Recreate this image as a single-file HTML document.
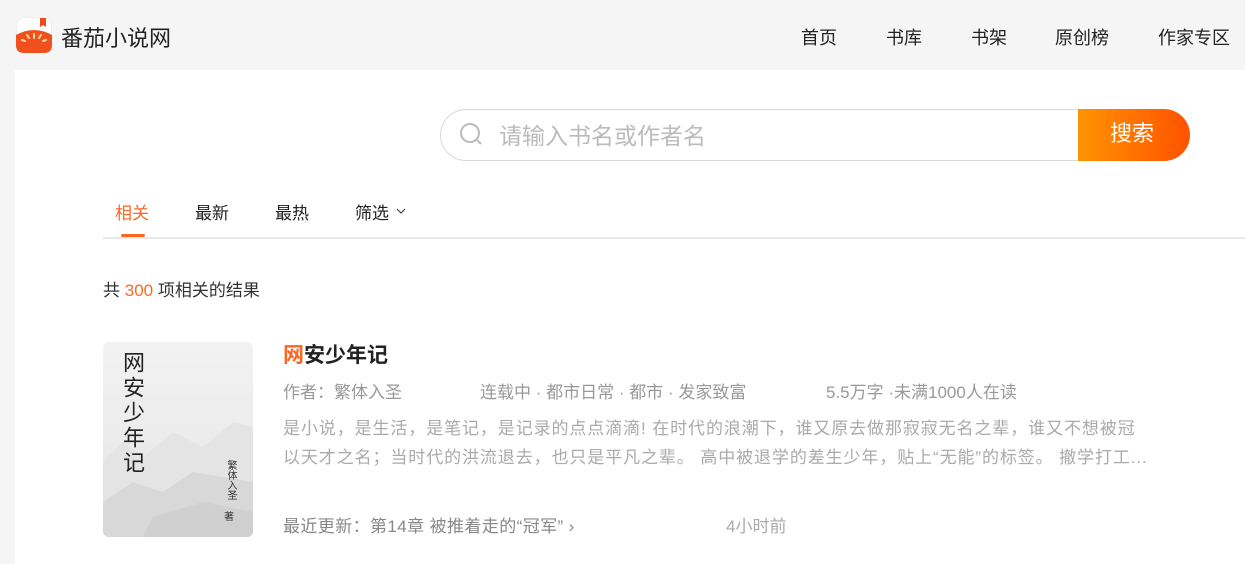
<!DOCTYPE html>
<html><head><meta charset="utf-8"><style>
*{margin:0;padding:0;box-sizing:border-box}
body{width:1245px;height:564px;overflow:hidden;background:#f5f5f5;font-family:"Liberation Sans","Noto Sans CJK SC",sans-serif;position:relative}
.a{position:absolute;white-space:nowrap}
.nav{font-size:18px;color:#222;top:24px}
</style></head><body>
<svg class="a" style="left:16px;top:17px" width="36" height="36" viewBox="0 0 36 36">
<rect x="0.5" y="0.5" width="35" height="35" rx="8" fill="#fff" stroke="#eee"/>
<path d="M24 1h6v9l-3-2-3 2z" fill="#f04a1a"/>
<path d="M0 18 Q18 8 36 18 V28 Q36 36 28 36 H8 Q0 36 0 28Z" fill="#f0501e"/>
<g stroke="#ffd9a0" stroke-width="2" stroke-linecap="round"><path d="M18 17v4M11 18l2 3M25 18l-2 3M6 23l3 1M30 23l-3 1"/></g>
</svg>
<div class="a" style="left:61px;top:21px;font-size:22px;color:#222">番茄小说网</div>
<div class="a nav" style="left:801px">首页</div>
<div class="a nav" style="left:886px">书库</div>
<div class="a nav" style="left:971px">书架</div>
<div class="a nav" style="left:1055px">原创榜</div>
<div class="a nav" style="left:1158px">作家专区</div>
<div class="a" style="left:15px;top:70px;width:1230px;height:494px;background:#fff"></div>
<div class="a" style="left:440px;top:109px;width:660px;height:52px;border:1px solid #d9d9d9;border-radius:26px 0 0 26px;border-right:none"></div>
<svg class="a" style="left:458px;top:121px" width="26" height="26" viewBox="0 0 26 26"><circle cx="12" cy="12" r="9" fill="none" stroke="#bbb" stroke-width="2"/><path d="M18 18l5 5" stroke="#bbb" stroke-width="2"/></svg>
<div class="a" style="left:499px;top:117px;font-size:23px;color:#bbb">请输入书名或作者名</div>
<div class="a" style="left:1078px;top:109px;width:112px;height:52px;border-radius:0 26px 26px 0;background:linear-gradient(90deg,#ff9300,#ff5200);color:#fff;font-size:22px;text-align:center;line-height:50px;padding-right:4px">搜索</div>
<div class="a" style="left:115px;top:199px;font-size:17px;color:#fa6725">相关</div>
<div class="a" style="left:121px;top:234px;width:24px;height:3px;background:#fa6725;border-radius:2px"></div>
<div class="a" style="left:195px;top:199px;font-size:17px;color:#222">最新</div>
<div class="a" style="left:275px;top:199px;font-size:17px;color:#222">最热</div>
<div class="a" style="left:355px;top:199px;font-size:17px;color:#222">筛选</div>
<svg class="a" style="left:396px;top:207px" width="10" height="8" viewBox="0 0 10 8"><path d="M1 2l4 4 4-4" fill="none" stroke="#444" stroke-width="1.2"/></svg>
<div class="a" style="left:103px;top:237px;width:1142px;height:2px;background:#e8e8e8"></div>
<div class="a" style="left:103px;top:276px;font-size:17px;color:#333">共 <span style="color:#fa6725">300</span> 项相关的结果</div>
<div class="a" style="left:103px;top:342px;width:150px;height:195px;border-radius:6px;background:linear-gradient(180deg,#f2f2f2 0%,#ececec 50%,#d9d9d9 100%);overflow:hidden">
<svg width="150" height="195" style="position:absolute;left:0;top:0"><path d="M0 120 L20 100 L40 115 L70 90 L100 105 L130 80 L150 85 V195 H0Z" fill="#e4e4e4"/><path d="M0 160 L30 140 L60 150 L90 130 L150 140 V195 H0Z" fill="#d8d8d8"/><path d="M50 175 L100 160 L150 170 V195 H40Z" fill="#d0d0d0"/></svg>
<div style="position:absolute;left:17px;top:9px;writing-mode:vertical-rl;font-size:22px;letter-spacing:3px;line-height:24px;color:#222">网安少年记</div>
<div style="position:absolute;left:121px;top:118px;writing-mode:vertical-rl;font-size:10px;line-height:12px;color:#333">繁体入圣</div>
<div style="position:absolute;left:121px;top:166px;font-size:10px;color:#333">著</div>
</div>
<div class="a" style="left:283px;top:339px;font-size:21px;font-weight:bold;color:#222"><span style="color:#fa6725">网</span>安少年记</div>
<div class="a" style="left:283px;top:378px;font-size:17px;color:#999">作者：繁体入圣</div>
<div class="a" style="left:480px;top:378px;font-size:17px;color:#999">连载中 · 都市日常 · 都市 · 发家致富</div>
<div class="a" style="left:826px;top:378px;font-size:17px;color:#999">5.5万字 ·未满1000人在读</div>
<div class="a" style="left:283px;top:414px;font-size:17px;letter-spacing:0.9px;color:#aaa;line-height:29px">是小说，是生活，是笔记，是记录的点点滴滴! 在时代的浪潮下，谁又原去做那寂寂无名之辈，谁又不想被冠<br>以天才之名；当时代的洪流退去，也只是平凡之辈。 高中被退学的差生少年，贴上“无能”的标签。 撤学打工...</div>
<div class="a" style="left:283px;top:512px;font-size:17px;letter-spacing:0.4px;color:#888">最近更新：第14章 被推着走的“冠军” ›</div>
<div class="a" style="left:726px;top:512px;font-size:17px;color:#aaa">4小时前</div>
</body></html>
